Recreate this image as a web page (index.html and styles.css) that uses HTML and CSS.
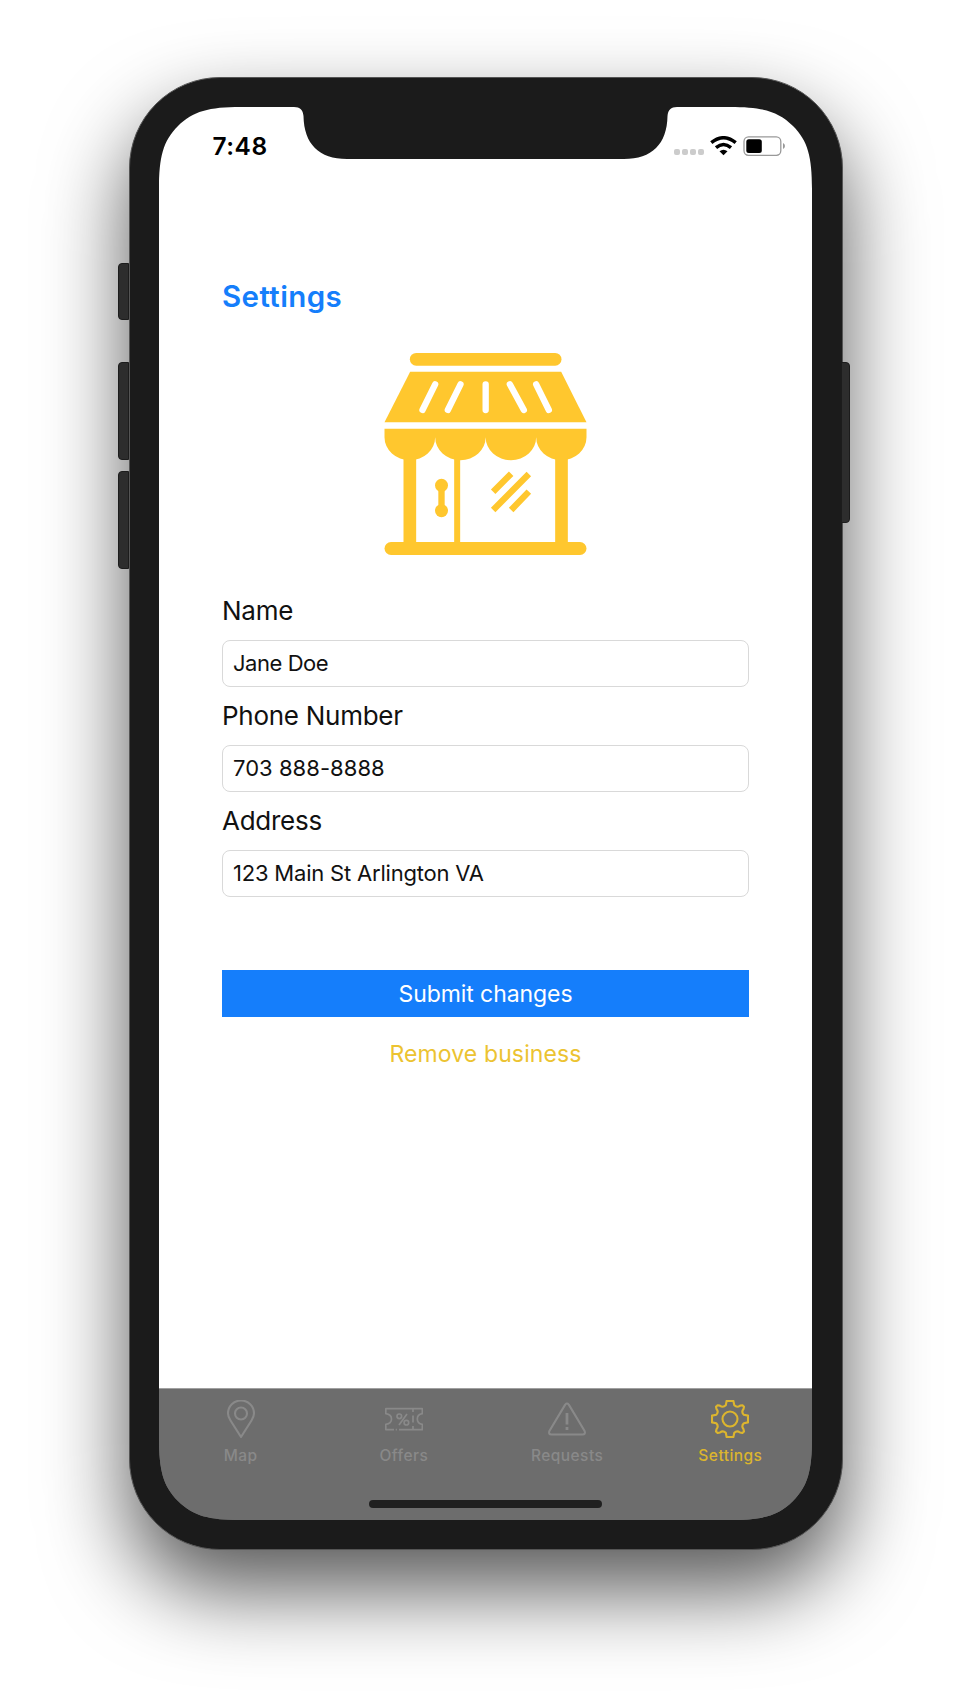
FILE: index.html
```html
<!DOCTYPE html>
<html lang="en">
<head>
<meta charset="utf-8">
<title>Settings</title>
<link rel="stylesheet" href="styles.css">
</head>
<body>
<div class="phone">
  <i class="key key-mute"></i>
  <i class="key key-up"></i>
  <i class="key key-down"></i>
  <i class="key key-power"></i>
  <main class="screen">
    <header class="status">
      <span class="time">7:48</span>
      <svg class="indicators" width="112" height="20" viewBox="0 0 112 20">
        <g fill="#ccc">
          <rect x="0" y="13" width="6" height="6" rx="2"/>
          <rect x="8" y="13" width="6" height="6" rx="2"/>
          <rect x="16" y="13" width="6" height="6" rx="2"/>
          <rect x="24" y="13" width="6" height="6" rx="2"/>
        </g>
        <g fill="none" stroke="#000" stroke-width="3.5">
          <path d="M37.3 6.7 Q49.5 -3.2 61.7 6.7"/>
          <path d="M42 11.6 Q49.500 5.400 57 11.600"/>
        </g>
        <path d="M45.500 15.200 Q49.500 12.200 53.500 15.200 L49.500 19.200 Z"/>
        <rect x="70" y="0.900" width="36.800" height="18.400" rx="4.500" fill="none" stroke="#999" stroke-width="1.300"/>
        <rect x="72.300" y="3.200" width="15.500" height="13.800" rx="2.500"/>
        <path d="M109 7 Q111 7.800 111 10 Q111 12.200 109 13Z" fill="#999"/>
      </svg>
    </header>
    <section class="content">
      <h1 class="title">Settings</h1>
      <svg class="store" width="203" height="202" viewBox="-1.5 0 609 606" fill="#ffc72e">
        <rect x="76" y="0" width="455" height="38" rx="19"/>
        <path d="M77 56H530L606 208H0Z"/>
        <path d="M152 94L114 171M228 94L190 171M303.500 94V171M376 94L418 171M455 94L493 171" stroke="#fff" stroke-width="19" stroke-linecap="round"/>
        <path d="M0 227H606V253A75 68 0 0 1 455 253A75 68 0 0 1 303.500 253A75 68 0 0 1 152 253A75 68 0 0 1 0 253Z"/>
        <path d="M57 300H95V575H57ZM209 300H227V575H209ZM512 300H550V575H512Z"/>
        <rect x="0" y="567" width="606" height="39" rx="19.500"/>
        <circle cx="171" cy="397" r="19.500"/>
        <circle cx="171" cy="473" r="19.500"/>
        <rect x="161.500" y="397" width="19" height="76"/>
        <path d="M326 416L380 362M326 471L433 363M380 471L433 416" stroke="#ffc72e" stroke-width="19"/>
      </svg>
      <form class="form">
        <label class="label" for="name">Name</label>
        <input class="field field-name" id="name" value="Jane Doe">
        <label class="label" for="phone">Phone Number</label>
        <input class="field field-phone" id="phone" value="703 888-8888">
        <label class="label" for="address">Address</label>
        <input class="field" id="address" value="123 Main St Arlington VA">
        <button class="submit" type="button">Submit changes</button>
        <button class="remove" type="button">Remove business</button>
      </form>
    </section>
    <nav class="tabs">
      <a class="tab">
        <svg class="icon" viewBox="0 0 38 38"><path d="M19 37L8.500 20.500Q6 16.500 6 13.500A13 13 0 0 1 32 13.500Q32 16.500 29.500 20.500Z"/><circle cx="19" cy="13.500" r="6"/></svg>
        <span class="tab-name">Map</span>
      </a>
      <a class="tab">
        <svg class="icon thin" viewBox="0 0 38 38"><path d="M9 29.700H.800V24.300Q6.500 23.500 6.500 19Q6.500 14.500 .800 13.700V8.700H37.300V13.700Q32.300 14.500 32.300 19Q32.300 23.500 37.300 24.300V29.700H14M10.700 29.700H11.900M28 8.700V12M28 15.500V22.500M28 26V29.700M22 14L14 25"/><circle cx="14.300" cy="16.300" r="2.300"/><circle cx="21.400" cy="22.700" r="2.300"/></svg>
        <span class="tab-name">Offers</span>
      </a>
      <a class="tab">
        <svg class="icon" viewBox="0 0 38 38"><path d="M17.200 4.600Q19 2.500 20.800 4.600L36.600 31Q37.800 34.500 34.500 34.500H3.500Q.200 34.500 1.400 31Z"/><path class="mark" d="M19 13V24.500M19 27V30"/></svg>
        <span class="tab-name">Requests</span>
      </a>
      <a class="tab active">
        <svg class="icon" viewBox="0 0 38 38"><path d="M15.600 1H22.400L23.300 5.300Q26 8 29.200 5.600L31.500 5.200L33 6.700L32.500 9Q30 12 32.800 14.800L37 15.600V22.400L32.800 23.200Q30 26 32.500 29.200L33 31.400L31.400 33L29 32.500Q26 30 23.300 32.800L22.400 37H15.600L14.800 32.800Q12 30 9 32.500L6.600 33L5 31.400L5.500 29.200Q8 26 5.300 23.200L1 22.400V15.600L5.300 14.800Q8 12 5.500 9L5 6.700L6.600 5.200L8.800 5.600Q12 8 14.800 5.300Z"/><circle cx="19" cy="19" r="7.500"/></svg>
        <span class="tab-name">Settings</span>
      </a>
    </nav>
    <i class="home"></i>
  </main>
</div>
</body>
</html>
```
FILE: styles.css
```css
* { box-sizing: border-box; }
body {
  margin: 0;
  height: 1700px;
  overflow: hidden;
  background: #fff;
  font-family: Inter, Roboto, sans-serif;
}
.phone {
  position: relative;
  width: 714px;
  height: 1473px;
  margin: 76.5px 0 0 128.500px;
  padding: 29.500px 29px 28.500px 29.500px;
  border: 1px solid #555;
  border-radius: 91px;
  background: #1b1b1b;
  box-shadow: 0 40px 84px rgba(0, 0, 0, .66);
}
.key {
  position: absolute;
  left: -11.500px;
  width: 11px;
  height: 98px;
  border: 1px solid #1c1c1c;
  border-radius: 4px 0 0 4px;
  background: #2d2d2d;
}
.key-mute { top: 185.500px; height: 57px; }
.key-up { top: 284.500px; }
.key-down { top: 393.500px; }
.key-power { top: 284.500px; left: 711.500px; width: 9px; height: 161px; border-radius: 0 4px 4px 0; }

.screen {
  position: relative;
  display: flex;
  flex-direction: column;
  width: 653px;
  height: 1413px;
  background: linear-gradient(#fff 1290px, #6d6d6d 1290px);
  clip-path: path("M0 82C0 50 4 34 19 19C34 4 50 0 82 0H135C141 0 144 3 144.500 9C145 37 160 52 188 52H465C493 52 508 37 508.500 9C509 3 512 0 518 0H571C603 0 619 4 634 19C649 34 653 50 653 82V1331C653 1363 649 1379 634 1394C619 1409 603 1413 571 1413H82C50 1413 34 1409 19 1394C4 1379 0 1363 0 1331Z");
}
.status {
  display: flex;
  justify-content: space-between;
  align-items: flex-start;
  height: 165px;
  padding: 29px 26px 0 53.500px;
}
.time { font-size: 24.500px; line-height: 20px; font-weight: 600; letter-spacing: .5px; }
.content { padding: 0 64px 0 63px; flex: 1; }
.title {
  margin: 0;
  color: #157efb;
  font-size: 29.500px;
  line-height: 48px;
  font-weight: 600;
  letter-spacing: .4px;
}
.store { display: block; margin: 33px auto 0 162px; }
.form { display: flex; flex-direction: column; padding-top: 27px; }
.label { height: 58px; font-size: 26px; line-height: 58px; letter-spacing: -.27px; color: #111; }
.field {
  width: 527px;
  height: 47px;
  padding: 0 10px 2px;
  border: 1px solid #d9d9d9;
  border-radius: 8px;
  background: #fff;
  color: #111;
  font: 400 22px Inter, Roboto, sans-serif;
  letter-spacing: -.2px;
}
.field-name { letter-spacing: -.45px; }
.field-phone { letter-spacing: .05px; }
.submit, .remove {
  width: 527px;
  height: 47.500px;
  margin-top: 72.500px;
  padding: 1px 0 0;
  border: 0;
  background: #157efb;
  color: #fff;
  font: 400 23px Inter, Roboto, sans-serif;
  letter-spacing: -.08px;
}
.remove { margin-top: 12.500px; background: none; color: #ecc331; letter-spacing: .12px; }

.tabs {
  display: flex;
  height: 132px;
  padding-top: 11px;
  border-top: 1px solid #a0a0a0;
  background: #6d6d6d;
}
.tab {
  display: flex;
  flex: 1;
  flex-direction: column;
  align-items: center;
  color: #898989;
}
.active { color: #dcb52e; }
.icon { width: 38px; height: 38px; fill: none; stroke: currentColor; stroke-width: 2.100; stroke-linejoin: round; }
.thin { stroke-width: 1.700; }
.mark { stroke-width: 2.800; }
.tab-name { margin-top: 8px; font-size: 15.500px; line-height: 20px; font-weight: 500; letter-spacing: .45px; }
.home {
  position: absolute;
  left: 210px;
  bottom: 12.500px;
  width: 233px;
  height: 8px;
  border-radius: 4px;
  background: #202020;
}
```
